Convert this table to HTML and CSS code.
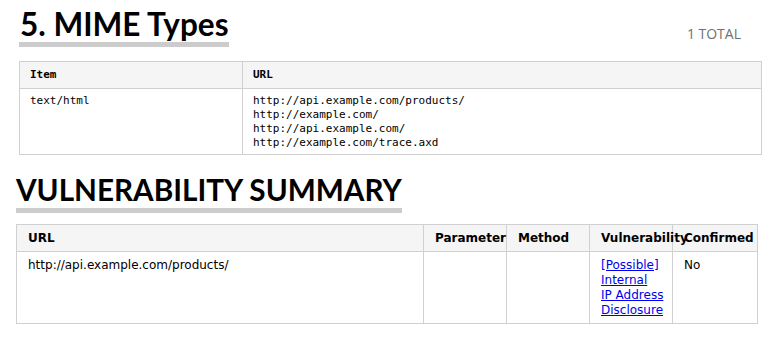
FILE: index.html
```html
<!DOCTYPE html>
<html>
<head>
<meta charset="utf-8">
<link rel="stylesheet" href="styles.css">
</head>
<body>
<section class="mime">
  <div class="head-row">
    <h2 class="title">5. MIME Types</h2>
    <span class="total">1 TOTAL</span>
  </div>
  <table class="mime-table">
    <thead>
      <tr><th class="c-item">Item</th><th>URL</th></tr>
    </thead>
    <tbody>
      <tr>
        <td>text/html</td>
        <td>http://api.example.com/products/<br>http://example.com/<br>http://api.example.com/<br>http://example.com/trace.axd</td>
      </tr>
    </tbody>
  </table>
</section>
<section class="vuln">
  <h2 class="title caps">VULNERABILITY SUMMARY</h2>
  <table class="vuln-table">
    <colgroup>
      <col class="w-url">
      <col class="w-col">
      <col class="w-col">
      <col class="w-col">
      <col class="w-conf">
    </colgroup>
    <thead>
      <tr>
        <th>URL</th>
        <th>Parameter</th>
        <th>Method</th>
        <th>Vulnerability</th>
        <th>Confirmed</th>
      </tr>
    </thead>
    <tbody>
      <tr>
        <td>http://api.example.com/products/</td>
        <td></td>
        <td></td>
        <td class="c-vuln"><a href="#">[Possible] Internal IP&nbsp;Address Disclosure</a></td>
        <td>No</td>
      </tr>
    </tbody>
  </table>
</section>
</body>
</html>
```

FILE: styles.css
```css
html, body {
  margin: 0;
  padding: 0;
  background: #fff;
}

body {
  font-family: "DejaVu Sans", Verdana, sans-serif;
  color: #000;
}

.mime {
  padding: 0 13px 0 19px;
}

.head-row {
  display: flex;
  justify-content: space-between;
  align-items: flex-start;
}

.title {
  display: inline-block;
  margin: 0;
  font-family: "Lato", sans-serif;
  font-weight: 700;
  font-size: 31.5px;
  line-height: 36px;
  padding-top: 6px;
  padding-left: 1px;
  padding-right: 0;
  border-bottom: 5px solid #cccccc;
  color: #000;
}

.total {
  font-family: "Open Sans", sans-serif;
  font-size: 14px;
  color: #707070;
  margin-top: 24px;
  margin-right: 21px;
}

.mime-table {
  width: 100%;
  margin-top: 14px;
  border-collapse: collapse;
  font-family: "DejaVu Sans Mono", monospace;
  font-size: 11px;
  line-height: 14px;
}

.mime-table th,
.mime-table td {
  border: 1px solid #d0d0d0;
  text-align: left;
  vertical-align: top;
  padding: 5px 10px 4px;
}

.mime-table th {
  background: #f5f5f5;
  font-weight: 700;
  padding: 6px 10px;
}

.mime-table .c-item {
  width: 202px;
}

.vuln {
  padding: 0 18px 0 16px;
  margin-top: 17px;
}

.vuln .title {
  padding-top: 0;
  font-size: 29.7px;
  padding-left: 0;
  padding-right: 0;
}

.vuln-table {
  width: 741px;
  table-layout: fixed;
  margin-top: 11px;
  border-collapse: collapse;
  font-size: 12px;
  line-height: 15px;
}

.w-url { width: 407px; }
.w-col { width: 83px; }
.w-conf { width: 85px; }

.vuln-table th,
.vuln-table td {
  border: 1px solid #d0d0d0;
  text-align: left;
  vertical-align: top;
  padding: 6px 6px 5px 11px;
  overflow: visible;
  white-space: normal;
}

.vuln-table th {
  background: #f5f5f5;
  font-weight: 700;
  font-size: 12px;
  line-height: 16px;
  padding: 5px 0 5px 11px;
  white-space: nowrap;
}

.vuln-table a {
  color: #0000ee;
}
```
